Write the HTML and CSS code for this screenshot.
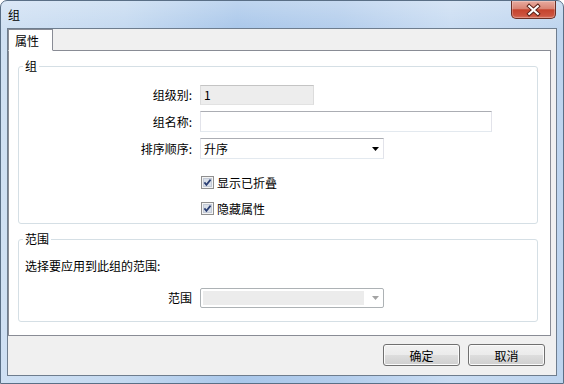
FILE: index.html
```html
<!DOCTYPE html>
<html lang="zh-CN">
<head>
  <meta charset="UTF-8">
  <title>组</title>
  <link rel="stylesheet" href="styles.css">
</head>
<body>
  <div class="window">
    <div class="titlebar">
      <span class="title">组</span>
      <button class="close" title="关闭">
        <svg width="45" height="18" viewBox="0 0 45 18">
          <path d="M18 5 L27 13 M27 5 L18 13" stroke="#5a2118" stroke-width="4.2" stroke-linecap="square" fill="none"/>
          <path d="M18 5 L27 13 M27 5 L18 13" stroke="#fff" stroke-width="2.2" stroke-linecap="square" fill="none"/>
        </svg>
      </button>
    </div>

    <div class="client">
      <div class="tabs">
        <div class="tab active">属性</div>
      </div>

      <div class="tab-panel">
        <fieldset class="group">
          <legend>组</legend>
          <div class="form">
            <span class="form-label">组级别:</span>
            <div class="field field-disabled field-short">1</div>

            <span class="form-label">组名称:</span>
            <div class="field field-long"></div>

            <span class="form-label">排序顺序:</span>
            <div class="field select">
              <span>升序</span>
              <svg width="7" height="4" viewBox="0 0 7 4"><polygon points="0,0 7,0 3.5,4" fill="#000"/></svg>
            </div>
          </div>

          <div class="checks">
            <label class="check">
              <svg width="13" height="13" viewBox="0 0 13 13">
                <rect x="0.5" y="0.5" width="12" height="12" fill="#f4f4f4" stroke="#8f8f8f"/>
                <rect x="2.5" y="2.5" width="8" height="8" fill="#d9dfe8" stroke="#c3cad6"/>
                <path d="M3.4 6.4 L5.4 8.8 L9.6 3.6" stroke="#2b3f73" stroke-width="1.7" fill="none"/>
              </svg>
              <span>显示已折叠</span>
            </label>
            <label class="check">
              <svg width="13" height="13" viewBox="0 0 13 13">
                <rect x="0.5" y="0.5" width="12" height="12" fill="#f4f4f4" stroke="#8f8f8f"/>
                <rect x="2.5" y="2.5" width="8" height="8" fill="#d9dfe8" stroke="#c3cad6"/>
                <path d="M3.4 6.4 L5.4 8.8 L9.6 3.6" stroke="#2b3f73" stroke-width="1.7" fill="none"/>
              </svg>
              <span>隐藏属性</span>
            </label>
          </div>
        </fieldset>

        <fieldset class="group group-scope">
          <legend>范围</legend>
          <p class="scope-note">选择要应用到此组的范围:</p>
          <div class="form scope-row">
            <span class="form-label">范围</span>
            <div class="select-disabled">
              <span class="select-fill"></span>
              <svg width="7" height="4" viewBox="0 0 7 4"><polygon points="0,0 7,0 3.5,4" fill="#a3a3a3"/></svg>
            </div>
          </div>
        </fieldset>
      </div>

      <div class="actions">
        <button class="btn">确定</button>
        <button class="btn">取消</button>
      </div>
    </div>
  </div>
</body>
</html>
```

FILE: styles.css
```css
* { box-sizing: border-box; margin: 0; padding: 0; }
body {
  width: 564px;
  height: 384px;
  overflow: hidden;
  background: #fff;
  font-family: "Noto Sans CJK SC", "Noto Sans", sans-serif;
  font-size: 12px;
  color: #000;
}
.window {
  width: 564px;
  height: 384px;
  display: flex;
  flex-direction: column;
  padding: 0 6px 7px;
  border: 1px solid #5a6f86;
  border-radius: 7px 7px 0 0;
  background:
    linear-gradient(180deg, rgba(255, 255, 255, 0.25), rgba(255, 255, 255, 0) 30px),
    linear-gradient(90deg, #cfe0f3 0, #c4d9f0 22%, #a9c7ea 42%, #b3cdec 60%, #c9dcf2 80%, #bdd4ee 100%);
}
.titlebar {
  height: 27px;
  display: flex;
  align-items: center;
  padding-left: 1px;
}
.title {
  line-height: 14px;
}
.close {
  margin-left: auto;
  margin-right: 1px;
  align-self: flex-start;
  width: 45px;
  height: 18px;
  border: 1px solid #6b2f25;
  border-top: none;
  border-radius: 0 0 5px 5px;
  background: linear-gradient(180deg, #e8ab9f 0, #d98474 45%, #c5432d 52%, #cc5440 85%, #d9735f 100%);
  box-shadow: inset 0 0 0 1px rgba(255, 255, 255, 0.25);
  display: flex;
  align-items: center;
  justify-content: center;
}
.close svg { display: block; }

.client {
  height: 348px;
  display: flex;
  flex-direction: column;
  border: 1px solid #6e7d8e;
  background: #f0f0f0;
}
.tabs {
  height: 21px;
  display: flex;
}
.tab {
  position: relative;
  z-index: 1;
  width: 45px;
  height: 22px;
  padding-left: 6px;
  line-height: 21px;
  border: 1px solid #898c95;
  border-bottom: 1px solid #fff;
  background: #fff;
}
.tab-panel {
  width: 543px;
  height: 286px;
  padding: 8px 0 0 9px;
  border: 1px solid #898c95;
  background: #fff;
}

.group {
  width: 520px;
  border: 1px solid #d5dfe5;
  border-radius: 3px;
  padding: 0 0 8px;
}
.group legend {
  margin-left: 4px;
  padding: 0 2px;
  line-height: 14px;
}
.form {
  display: grid;
  grid-template-columns: 173px auto;
  column-gap: 8px;
  row-gap: 6px;
  align-items: center;
  justify-items: start;
  padding-top: 12px;
}
.form-label {
  justify-self: end;
  line-height: 14px;
}
.field {
  height: 21px;
  padding-left: 3px;
  line-height: 19px;
  border: 1px solid;
  border-color: #abadb3 #e2e3ea #e3e9ef #e2e3ea;
  background: #fff;
}
.field-short { width: 114px; height: 20px; line-height: 18px; }
.field-long { width: 292px; }
.field-disabled {
  border-color: #c4c4c4 #dcdcdc #e2e2e2 #dcdcdc;
  background: #ededed;
}
.select {
  width: 184px;
  display: flex;
  align-items: center;
  justify-content: space-between;
  padding-right: 4px;
}
.select svg { display: block; }

.checks {
  display: flex;
  flex-direction: column;
  gap: 13px;
  margin: 17px 0 0 182px;
}
.check {
  height: 13px;
  display: flex;
  align-items: center;
  gap: 3px;
  line-height: 13px;
}
.check svg { display: block; }

.group-scope {
  margin-top: 8px;
  padding-bottom: 13px;
}
.scope-note {
  margin-top: 13px;
  padding-left: 6px;
  line-height: 14px;
}
.scope-row {
  padding-top: 15px;
}
.select-disabled {
  width: 184px;
  height: 20px;
  display: flex;
  align-items: center;
  gap: 8px;
  padding: 2px;
  border: 1px solid #adb2b5;
  border-radius: 2px;
  background: #fff;
}
.select-fill {
  width: 161px;
  height: 14px;
  background: #ececec;
}
.select-disabled svg { display: block; }

.actions {
  display: flex;
  justify-content: flex-end;
  gap: 8px;
  padding: 8px 11px 0 0;
}
.btn {
  width: 77px;
  height: 22px;
  font-family: inherit;
  font-size: 12px;
  color: #000;
  border: 1px solid #707070;
  border-radius: 3px;
  background: linear-gradient(180deg, #f2f2f2 0, #ebebeb 50%, #dddddd 51%, #cfcfcf 100%);
  box-shadow: inset 0 0 0 1px #fbfbfb;
}
```
